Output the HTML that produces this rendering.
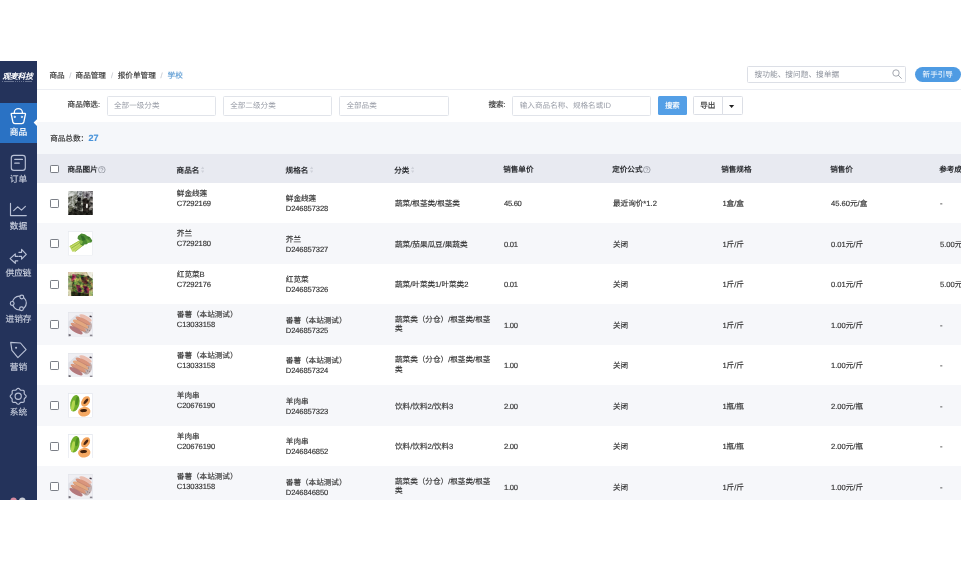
<!DOCTYPE html>
<html lang="zh-CN">
<head>
<meta charset="utf-8">
<title>报价单管理</title>
<style>
html,body{margin:0;padding:0;}
body{width:961px;height:561px;overflow:hidden;background:#fff;position:relative;will-change:transform;
 font-family:"Liberation Sans",sans-serif;font-size:7.6px;color:#333;line-height:1;text-rendering:geometricPrecision;-webkit-text-stroke:0.15px currentColor;}
#thead,#logo,.inp span,#gsearch span,#guide{-webkit-text-stroke:0;}
div,span{box-sizing:border-box;}
.abs{position:absolute;}
#side{position:absolute;left:0;top:61px;width:37px;height:438.6px;background:#24335b;overflow:hidden;}
#logo{position:absolute;left:-0.9px;top:12.3px;width:37px;text-align:center;color:#fff;font-weight:bold;font-style:italic;font-size:7.8px;letter-spacing:-0.2px;white-space:nowrap;}
#logosub{position:absolute;left:2.4px;top:19.6px;width:30px;height:1px;background:repeating-linear-gradient(90deg,#aab3c8 0,#aab3c8 1.5px,transparent 1.5px,transparent 2.1px);opacity:.5;}
.nav{position:absolute;left:0;width:37px;text-align:center;color:#cdd3e1;font-size:8.7px;white-space:nowrap;}
.nav svg{position:absolute;overflow:visible;}
.nav .lb{position:absolute;left:0;width:37px;text-align:center;}
#act{position:absolute;left:0;top:42px;width:37px;height:40px;background:#2a72c4;}
#notch{position:absolute;left:33.4px;top:57.6px;width:0;height:0;border-top:4px solid transparent;border-bottom:4px solid transparent;border-right:3.8px solid #fff;}
#top{position:absolute;left:37px;top:61px;width:924px;height:29.1px;background:#fff;border-bottom:1px solid #eceef3;}
#crumb{position:absolute;left:12.4px;top:11.2px;white-space:nowrap;color:#333;font-size:7.6px;}
#crumb span,#crumb i,#crumb b{position:absolute;top:0;}
#crumb i{font-style:normal;color:#c9ccd3;}
#crumb b{font-weight:normal;color:#5c9bd3;}
#gsearch{position:absolute;left:710px;top:5.4px;width:158.6px;height:16.4px;border:1px solid #dcdfe6;border-radius:1.5px;background:#fff;}
#gsearch span{position:absolute;left:6.6px;top:3.7px;color:#8d929c;font-size:7.7px;white-space:nowrap;}
#guide{position:absolute;left:878px;top:6px;width:45.5px;height:15.2px;border-radius:8px;background:#4e9be3;color:#fff;font-size:7.6px;text-align:center;line-height:15.2px;}
#filter{position:absolute;left:37px;top:90.3px;width:924px;height:31.7px;background:#fff;}
.inp{position:absolute;top:6px;height:19.4px;border:1px solid #e1e4ea;border-radius:1.5px;background:#fff;}
.inp span{position:absolute;left:6.4px;top:5.2px;color:#9a9ea8;font-size:7.6px;white-space:nowrap;}
.lbl{position:absolute;top:11px;white-space:nowrap;color:#333;}
#count{position:absolute;left:37px;top:122px;width:924px;height:32px;background:#f5f7fa;}
#count span{position:absolute;left:13.2px;top:11.8px;white-space:nowrap;}
#count b{color:#4a94da;font-size:9px;margin-left:.3px;}
#thead{position:absolute;left:37px;top:154px;width:924px;height:28.7px;background:#e8eaf1;font-weight:bold;color:#2d2f33;}
#thead .h{position:absolute;top:11.5px;white-space:nowrap;}
.q{display:inline-block;width:7.6px;height:7.6px;vertical-align:-1.2px;margin-left:.4px;}
.s{display:inline-block;width:3.4px;height:7.6px;vertical-align:-1.1px;margin-left:1.4px;}
.cb{position:absolute;left:13.2px;width:8.8px;height:8.8px;border:1px solid #7b7f87;border-radius:1.2px;background:#fff;}
.row{position:absolute;left:37px;width:924px;height:40.5px;background:#fff;}
.row.alt{background:#f6f7fa;}
.row .cb{top:16.1px;}
.row .th{position:absolute;left:30.6px;top:8.2px;width:25px;height:24.6px;}
.c{position:absolute;top:0;height:40.5px;white-space:nowrap;}
.c1{left:139.8px;}.c2{left:248.8px;}.c3{left:358px;width:100px;white-space:normal;}.c4{left:467px;letter-spacing:-.3px;}.c5{left:576px;}.c6{left:685.4px;}.c7{left:794px;}.c8{left:903px;}
.nm{padding-top:6.3px;line-height:9.8px;}
.two{padding-top:11.7px;line-height:10px;}
.nm div+div,.two div+div{letter-spacing:-0.12px;}
.mid{display:flex;align-items:center;line-height:9.4px;padding-top:1.6px;}
.ml{line-height:9.7px;padding-top:0;}
</style>
</head>
<body>
<svg width="0" height="0" style="position:absolute">
<defs>
<filter id="b1" x="-10%" y="-10%" width="120%" height="120%"><feGaussianBlur stdDeviation="0.7"/></filter>
<filter id="b2" x="-10%" y="-10%" width="120%" height="120%"><feGaussianBlur stdDeviation="0.45"/></filter>
<filter id="nz" x="0" y="0" width="100%" height="100%"><feTurbulence type="fractalNoise" baseFrequency="0.22" numOctaves="2" seed="7" result="n"/><feColorMatrix in="n" type="matrix" values="0 0 0 0 0  0 0 0 0 0  0 0 0 0 0  1.6 1.6 0 0 -1.05"/></filter>
<filter id="tx1" x="0" y="0" width="100%" height="100%" color-interpolation-filters="sRGB"><feTurbulence type="fractalNoise" baseFrequency="0.33" numOctaves="3" seed="11" result="n"/><feColorMatrix in="n" type="matrix" values="1.15 0 0 0 -0.12  1.15 0 0 0 -0.12  1.15 0 0 0 -0.12  0 0 0 0 1" result="g"/><feGaussianBlur in="SourceGraphic" stdDeviation="0.8" result="s"/><feBlend in="g" in2="s" mode="overlay"/></filter>
<filter id="tx2" x="0" y="0" width="100%" height="100%" color-interpolation-filters="sRGB"><feTurbulence type="fractalNoise" baseFrequency="0.3" numOctaves="3" seed="5" result="n"/><feColorMatrix in="n" type="matrix" values="0.9 0.4 0 0 -0.22  0.4 0.8 0 0 -0.17  0.35 0.35 0 0 0.1  0 0 0 0 1" result="g"/><feGaussianBlur in="SourceGraphic" stdDeviation="0.8" result="s"/><feBlend in="g" in2="s" mode="overlay"/></filter>
<clipPath id="cp"><rect width="25" height="25"/></clipPath>
<symbol id="im-herb" viewBox="0 0 25 25"><g clip-path="url(#cp)">
 <g filter="url(#tx1)">
  <rect width="25" height="25" fill="#7c7d76"/>
  <path d="M0 0h9l-1 4-8 3z" fill="#c6c9c5"/>
  <path d="M0 6l8-3 2 6-4 7-6-1z" fill="#8e9087"/>
  <path d="M9 0h6l-1 5-4 1z" fill="#8b8f92"/>
  <path d="M15 0h10v6l-5 2-5-2z" fill="#8f8c90"/>
  <path d="M10 6.5l3 .5-.5 4-3-1z" fill="#101011"/>
  <path d="M9 10l4 1 1 8-4 1-2-5z" fill="#3a3a34"/>
  <path d="M15 8l4-1 3 5-1 9-6 1z" fill="#2d2723"/>
  <path d="M0 18l6 0 8 3 11-2v6H0z" fill="#24231e"/>
  <path d="M0 15l5 1 2 4-7 2z" fill="#5a5b4c"/>
  <path d="M2 9l4 1 1 4-4 1z" fill="#a3a59c"/>
  <path d="M18.2 13l1.6 0 .2 4-1.8 .5z" fill="#e6e3df"/>
  <path d="M22 6l3 0v13l-3-1z" fill="#6f6b67"/>
 </g>
</g></symbol>
<symbol id="im-kale" viewBox="0 0 25 25"><g clip-path="url(#cp)">
 <rect width="25" height="25" fill="#fff"/>
 <g filter="url(#b2)">
  <path d="M1.4 15.4l9.6-5.6 4.4 4.4-8.6 6.6-2.6 .4z" fill="#c3d96a"/>
  <path d="M1.6 15.8l9.5-5.6" stroke="#a4c444" stroke-width="1" fill="none"/>
  <path d="M3 17.6l10-6.4" stroke="#8ab234" stroke-width=".8" fill="none"/>
  <path d="M4.8 19.6l9.6-6.8" stroke="#b2d050" stroke-width="1" fill="none"/>
  <path d="M6.8 21l9-7" stroke="#8fb638" stroke-width=".8" fill="none"/>
  <path d="M10 5l3.4-2.4 3.6 .6 2.4 2 2.6 .8 2.6 3.8-1.2 2-3 .2-1.6 1.4-2.4 .2-1.4 1.6-2.6-1.6-.6-3.6-2.4-2.4z" fill="#4c8a32"/>
  <path d="M12.4 4.2l3.6 1.4 1.6 3.6-3 .8z" fill="#2f6a26"/>
  <path d="M18 7.6l4.4 2.6-2.8 2.4z" fill="#6aa640"/>
  <path d="M12 9l3 1.5-1 3-3-1.5z" fill="#7db244"/>
  <path d="M19.6 5.6l2 1.2-1.4 1.2z" fill="#356f28"/>
 </g>
 <rect x=".3" y=".3" width="24.4" height="24.4" fill="none" stroke="#dfe3ea" stroke-width=".6"/>
</g></symbol>
<symbol id="im-amar" viewBox="0 0 25 25"><g clip-path="url(#cp)">
 <g filter="url(#tx2)">
  <rect width="25" height="25" fill="#6f743c"/>
  <path d="M0 0h25v2.5l-6 1.5-8-2-11 2z" fill="#cfcaa6"/>
  <path d="M19 0h6v7l-4-3z" fill="#f1efe4"/>
  <path d="M4.5 2l4 1-1 5-4 1z" fill="#b5566c"/>
  <path d="M0 5l3 2 1 9-2 6-2 1z" fill="#a9b07a"/>
  <path d="M6 8l6-3 4 4-3 8-6-2z" fill="#8d9a4a"/>
  <path d="M13 5l6 0 3 5-4 3-4-3z" fill="#5e3a2c"/>
  <path d="M8 13l4 1 2 6-4 1z" fill="#8a3650"/>
  <path d="M15 14l5 1 3 6-6 1z" fill="#7c2e42"/>
  <path d="M19 8l6 1v8l-4-3z" fill="#8c8a4e"/>
  <path d="M3 20l8 1 8 1 6-1v4H3z" fill="#2e3018"/>
  <path d="M0 18l3 1 0 6H0z" fill="#ded9b8"/>
  <path d="M21 19l4-2v8h-4z" fill="#b0b574"/>
  <path d="M5 14l3 1 0 5-3 0z" fill="#55682c"/>
 </g>
</g></symbol>
<symbol id="im-yam" viewBox="0 0 25 25"><g clip-path="url(#cp)">
 <rect width="25" height="25" fill="#efeff3"/>
 <g filter="url(#b2)">
  <path d="M0 10l8-7 4 1-12 13z" fill="#dedfe5"/>
  <ellipse cx="19.4" cy="15.5" rx="4.6" ry="6.6" transform="rotate(20 19.4 15.5)" fill="#c3b3b3"/>
  <path d="M18 13l1 .4M20 15l1 .5M19 18l1 .4M21.5 12l.8 .4M17.5 20l1 .3M21 18.5l.8.3" stroke="#5a4a50" stroke-width=".7"/>
  <ellipse cx="17.6" cy="6" rx="7" ry="2.3" transform="rotate(27 17.6 6)" fill="#e9bcae"/>
  <ellipse cx="15.1" cy="9" rx="8.4" ry="2.5" transform="rotate(27 15.1 9)" fill="#d9957c"/>
  <ellipse cx="12.6" cy="12.2" rx="8.8" ry="2.6" transform="rotate(27 12.6 12.2)" fill="#e3a77f"/>
  <ellipse cx="10.2" cy="15.4" rx="8.6" ry="2.5" transform="rotate(27 10.2 15.4)" fill="#d8967a"/>
  <ellipse cx="8" cy="18.5" rx="7.6" ry="2.4" transform="rotate(29 8 18.5)" fill="#b4797c"/>
  <path d="M8.5 7.2l13 6.6M6 10.4l13.4 6.8M3.8 13.6l13 6.6" stroke="#8a5856" stroke-width=".45" opacity=".55" fill="none"/>
  <path d="M22 3.5l2 .5-.5 1.5-2-.7z" fill="#3a3440"/>
  <path d="M0 22l3 1-1 2H0z" fill="#6d6a72"/>
  <path d="M22 23h3v2h-3z" fill="#8a8790"/>
 </g>
 <rect x=".3" y=".3" width="24.4" height="24.4" fill="none" stroke="#dde0e8" stroke-width=".6"/>
</g></symbol>
<symbol id="im-papaya" viewBox="0 0 25 25"><g clip-path="url(#cp)">
 <rect width="25" height="25" fill="#fff"/>
 <g filter="url(#b2)">
  <ellipse cx="6.8" cy="10.4" rx="4.6" ry="8.6" transform="rotate(12 6.8 10.4)" fill="#6fae2c"/>
  <ellipse cx="4.9" cy="12.8" rx="1.7" ry="5.5" transform="rotate(12 4.9 12.8)" fill="#b2d650"/>
  <ellipse cx="9" cy="8" rx="1.5" ry="4.6" transform="rotate(12 9 8)" fill="#4f8f22"/>
  <ellipse cx="17.7" cy="8.6" rx="4" ry="5.8" transform="rotate(32 17.7 8.6)" fill="#f2a25a"/>
  <ellipse cx="18" cy="8.4" rx="1.4" ry="3.4" transform="rotate(38 18 8.4)" fill="#4a2714"/>
  <ellipse cx="16.3" cy="19" rx="6.3" ry="4.9" transform="rotate(-8 16.3 19)" fill="#f4a864"/>
  <ellipse cx="15.6" cy="17.8" rx="3.5" ry="1.6" transform="rotate(-5 15.6 17.8)" fill="#43220f"/>
 </g>
 <rect x=".3" y=".3" width="24.4" height="24.4" fill="none" stroke="#d9dee7" stroke-width=".6"/>
</g></symbol>
</defs>
</svg>

<div id="side">
  <div id="logo">观麦科技</div><div id="logosub"></div>
  <div id="act"></div>
  <svg class="abs" style="left:0;top:0" width="37" height="439" viewBox="0 61 37 439" fill="none" stroke="#b9c1d6" stroke-width="1.15" stroke-linecap="round" stroke-linejoin="round">
    <path d="M37.3 118.9L33.6 122.6L37.3 126.3z" fill="#fff" stroke="none"/>
    <!-- bag -->
    <g stroke="#fff" stroke-width="1.3">
      <path d="M14.3 113.3v-.8a4.05 3.9 0 0 1 8.1 0v.8"/>
      <path d="M11.6 113.4h13.5q.5 0 .4.6l-1.7 8q-.4 1.6-2 1.6h-6.9q-1.6 0-2-1.6l-1.7-8q-.1-.6.4-.6z"/>
      <circle cx="14.7" cy="116.9" r=".75" fill="#fff" stroke-width=".5"/>
      <circle cx="21.9" cy="116.9" r=".75" fill="#fff" stroke-width=".5"/>
    </g>
    <!-- order -->
    <rect x="11.3" y="155.4" width="14" height="15" rx="2.6"/>
    <path d="M14.8 159.4h7.6M14.8 163.2h4.4" stroke-width="1.3"/>
    <!-- data -->
    <path d="M10.5 203.4v12.2h15.8"/>
    <path d="M13.7 210.6l3.9-3.8 3.9 3.3 3.9-3.8"/>
    <!-- supply -->
    <path d="M18.9 252.3h2.7v-2.9l4.7 4.9-4.7 4.9v-2.8h-2.7"/>
    <path d="M17.8 256.4h-2.5v-2.5l-5.2 4.7 5.2 4.7v-2.5h2.5"/>
    <!-- stock -->
    <circle cx="19.4" cy="303" r="6.9"/>
    <circle cx="12.2" cy="303.4" r="1.9" fill="#24335b"/>
    <circle cx="21.8" cy="297" r="1.9" fill="#24335b"/>
    <circle cx="21.5" cy="308.8" r="1.9" fill="#24335b"/>
    <!-- tag -->
    <path d="M10.7 342.4l9.8.6 5.6 6.6-8.2 8-6-7.2z"/>
    <circle cx="16.1" cy="347.7" r="1.05" fill="#b9c1d6" stroke="none"/>
    <!-- gear -->
    <path d="M18.20 388.30L18.96 388.54L19.62 389.14L20.18 389.79L20.73 390.20L21.41 390.30L22.26 390.23L23.15 390.27L23.86 390.64L24.23 391.35L24.27 392.24L24.20 393.09L24.30 393.77L24.71 394.32L25.36 394.88L25.96 395.54L26.20 396.30L25.96 397.06L25.36 397.72L24.71 398.28L24.30 398.83L24.20 399.51L24.27 400.36L24.23 401.25L23.86 401.96L23.15 402.33L22.26 402.37L21.41 402.30L20.73 402.40L20.18 402.81L19.62 403.46L18.96 404.06L18.20 404.30L17.44 404.06L16.78 403.46L16.22 402.81L15.67 402.40L14.99 402.30L14.14 402.37L13.25 402.33L12.54 401.96L12.17 401.25L12.13 400.36L12.20 399.51L12.10 398.83L11.69 398.28L11.04 397.72L10.44 397.06L10.20 396.30L10.44 395.54L11.04 394.88L11.69 394.32L12.10 393.77L12.20 393.09L12.13 392.24L12.17 391.35L12.54 390.64L13.25 390.27L14.14 390.23L14.99 390.30L15.67 390.20L16.22 389.79L16.78 389.14L17.44 388.54L18.20 388.30z"/>
    <circle cx="18.2" cy="396.3" r="3.1"/>
    <!-- bottom dots -->
    <circle cx="13.6" cy="500.6" r="3.2" fill="#d58aa0" stroke="none"/>
    <circle cx="22.3" cy="500.6" r="3.2" fill="#c9cdd6" stroke="none"/>
  </svg>
  <div class="nav" style="top:42px;color:#fff"><div class="lb" style="top:25.4px">商品</div></div>
  <div class="nav" style="top:89px"><div class="lb" style="top:24.6px">订单</div></div>
  <div class="nav" style="top:135.5px"><div class="lb" style="top:25.6px">数据</div></div>
  <div class="nav" style="top:182px"><div class="lb" style="top:25.6px">供应链</div></div>
  <div class="nav" style="top:228.5px"><div class="lb" style="top:25.4px">进销存</div></div>
  <div class="nav" style="top:275px"><div class="lb" style="top:26.6px">营销</div></div>
  <div class="nav" style="top:321.5px"><div class="lb" style="top:25.5px">系统</div></div>
</div>

<div id="top">
  <div id="crumb"><span style="left:0">商品</span><i style="left:19.8px">/</i><span style="left:26.2px">商品管理</span><i style="left:61.6px">/</i><span style="left:68.4px">报价单管理</span><i style="left:111px">/</i><b style="left:118.2px">学校</b></div>
  <div id="gsearch"><span>搜功能、搜问题、搜单据</span><svg class="abs" style="left:144.4px;top:2px" width="10" height="10" viewBox="0 0 10 10" fill="none" stroke="#8d929c" stroke-width=".8"><circle cx="4" cy="4" r="3.2"/><path d="M6.4 6.4L9.4 9.4" stroke-linecap="round"/></svg></div>
  <div id="guide">新手引导</div>
</div>

<div id="filter">
  <div class="lbl" style="left:30.6px">商品筛选:</div>
  <div class="inp" style="left:69.6px;width:109.4px"><span>全部一级分类</span></div>
  <div class="inp" style="left:185.8px;width:109.4px"><span>全部二级分类</span></div>
  <div class="inp" style="left:302px;width:109.6px"><span>全部品类</span></div>
  <div class="lbl" style="left:451.4px">搜索:</div>
  <div class="inp" style="left:475.4px;width:138.6px"><span>输入商品名称、规格名或ID</span></div>
  <div class="abs" style="left:620.6px;top:6px;width:29.4px;height:19px;background:#549fe6;border-radius:1.5px;color:#fff;text-align:center;line-height:19px;font-size:7.4px">搜索</div>
  <div class="abs" style="left:656px;top:6px;width:29.6px;height:19px;border:1px solid #dcdfe6;border-radius:1.5px 0 0 1.5px;background:#fff;text-align:center;line-height:17px;">导出</div>
  <div class="abs" style="left:684.6px;top:6px;width:21.4px;height:19px;border:1px solid #dcdfe6;border-radius:0 1.5px 1.5px 0;background:#fff;"><svg class="abs" style="left:6.9px;top:7.4px" width="5.2" height="3" viewBox="0 0 5.2 3"><path d="M0 0h5.2L2.6 3z" fill="#222"/></svg></div>
</div>

<div id="count"><span>商品总数：<b>27</b></span></div>

<div id="thead">
  <span class="cb" style="top:10.6px"></span>
  <div class="h" style="left:30.4px">商品图片<svg class="q" viewBox="0 0 7.6 7.6"><circle cx="3.8" cy="3.8" r="3.3" fill="none" stroke="#7d828c" stroke-width=".65"/><path d="M2.75 3.1a1.05 1.05 0 1 1 1.6 .9q-.55.35-.55.9M3.8 5.6v.5" fill="none" stroke="#7d828c" stroke-width=".65"/></svg></div>
  <div class="h" style="left:139.6px">商品名<svg class="s" viewBox="0 0 3.4 7.6"><path d="M0 3.1L1.7 .6L3.4 3.1zM0 4.5L1.7 7L3.4 4.5z" fill="#cfd2da"/></svg></div>
  <div class="h" style="left:248.6px">规格名<svg class="s" viewBox="0 0 3.4 7.6"><path d="M0 3.1L1.7 .6L3.4 3.1zM0 4.5L1.7 7L3.4 4.5z" fill="#cfd2da"/></svg></div>
  <div class="h" style="left:357.2px">分类<svg class="s" viewBox="0 0 3.4 7.6"><path d="M0 3.1L1.7 .6L3.4 3.1zM0 4.5L1.7 7L3.4 4.5z" fill="#cfd2da"/></svg></div>
  <div class="h" style="left:466.2px">销售单价</div>
  <div class="h" style="left:575.2px">定价公式<svg class="q" viewBox="0 0 7.6 7.6"><circle cx="3.8" cy="3.8" r="3.3" fill="none" stroke="#7d828c" stroke-width=".65"/><path d="M2.75 3.1a1.05 1.05 0 1 1 1.6 .9q-.55.35-.55.9M3.8 5.6v.5" fill="none" stroke="#7d828c" stroke-width=".65"/></svg></div>
  <div class="h" style="left:684.2px">销售规格</div>
  <div class="h" style="left:793.2px">销售价</div>
  <div class="h" style="left:902.2px">参考成本</div>
</div>

<div class="row" style="top:182.7px">
  <span class="cb"></span>
  <svg class="th" viewBox="0 0 25 25"><use href="#im-herb"/></svg>
  <div class="c c1 nm"><div>鲜金线莲</div><div>C7292169</div></div>
  <div class="c c2 two"><div>鲜金线莲</div><div>D246857328</div></div>
  <div class="c c3 mid"><span>蔬菜/根茎类/根茎类</span></div>
  <div class="c c4 mid"><span>45.60</span></div>
  <div class="c c5 mid"><span>最近询价*1.2</span></div>
  <div class="c c6 mid"><span>1盒/盒</span></div>
  <div class="c c7 mid"><span>45.60元/盒</span></div>
  <div class="c c8 mid"><span>-</span></div>
</div>
<div class="row alt" style="top:223.2px">
  <span class="cb"></span>
  <svg class="th" viewBox="0 0 25 25"><use href="#im-kale"/></svg>
  <div class="c c1 nm"><div>芥兰</div><div>C7292180</div></div>
  <div class="c c2 two"><div>芥兰</div><div>D246857327</div></div>
  <div class="c c3 mid"><span>蔬菜/茄果瓜豆/果蔬类</span></div>
  <div class="c c4 mid"><span>0.01</span></div>
  <div class="c c5 mid"><span>关闭</span></div>
  <div class="c c6 mid"><span>1斤/斤</span></div>
  <div class="c c7 mid"><span>0.01元/斤</span></div>
  <div class="c c8 mid"><span>5.00元</span></div>
</div>
<div class="row" style="top:263.7px">
  <span class="cb"></span>
  <svg class="th" viewBox="0 0 25 25"><use href="#im-amar"/></svg>
  <div class="c c1 nm"><div>红苋菜B</div><div>C7292176</div></div>
  <div class="c c2 two"><div>红苋菜</div><div>D246857326</div></div>
  <div class="c c3 mid"><span>蔬菜/叶菜类1/叶菜类2</span></div>
  <div class="c c4 mid"><span>0.01</span></div>
  <div class="c c5 mid"><span>关闭</span></div>
  <div class="c c6 mid"><span>1斤/斤</span></div>
  <div class="c c7 mid"><span>0.01元/斤</span></div>
  <div class="c c8 mid"><span>5.00元</span></div>
</div>
<div class="row alt" style="top:304.2px">
  <span class="cb"></span>
  <svg class="th" viewBox="0 0 25 25"><use href="#im-yam"/></svg>
  <div class="c c1 nm"><div>番薯（本站测试）</div><div>C13033158</div></div>
  <div class="c c2 two"><div>番薯（本站测试）</div><div>D246857325</div></div>
  <div class="c c3 mid ml"><span>蔬菜类（分仓）/根茎类/根茎类</span></div>
  <div class="c c4 mid"><span>1.00</span></div>
  <div class="c c5 mid"><span>关闭</span></div>
  <div class="c c6 mid"><span>1斤/斤</span></div>
  <div class="c c7 mid"><span>1.00元/斤</span></div>
  <div class="c c8 mid"><span>-</span></div>
</div>
<div class="row" style="top:344.7px">
  <span class="cb"></span>
  <svg class="th" viewBox="0 0 25 25"><use href="#im-yam"/></svg>
  <div class="c c1 nm"><div>番薯（本站测试）</div><div>C13033158</div></div>
  <div class="c c2 two"><div>番薯（本站测试）</div><div>D246857324</div></div>
  <div class="c c3 mid ml"><span>蔬菜类（分仓）/根茎类/根茎类</span></div>
  <div class="c c4 mid"><span>1.00</span></div>
  <div class="c c5 mid"><span>关闭</span></div>
  <div class="c c6 mid"><span>1斤/斤</span></div>
  <div class="c c7 mid"><span>1.00元/斤</span></div>
  <div class="c c8 mid"><span>-</span></div>
</div>
<div class="row alt" style="top:385.2px">
  <span class="cb"></span>
  <svg class="th" viewBox="0 0 25 25"><use href="#im-papaya"/></svg>
  <div class="c c1 nm"><div>羊肉串</div><div>C20676190</div></div>
  <div class="c c2 two"><div>羊肉串</div><div>D246857323</div></div>
  <div class="c c3 mid"><span>饮料/饮料2/饮料3</span></div>
  <div class="c c4 mid"><span>2.00</span></div>
  <div class="c c5 mid"><span>关闭</span></div>
  <div class="c c6 mid"><span>1瓶/瓶</span></div>
  <div class="c c7 mid"><span>2.00元/瓶</span></div>
  <div class="c c8 mid"><span>-</span></div>
</div>
<div class="row" style="top:425.7px">
  <span class="cb"></span>
  <svg class="th" viewBox="0 0 25 25"><use href="#im-papaya"/></svg>
  <div class="c c1 nm"><div>羊肉串</div><div>C20676190</div></div>
  <div class="c c2 two"><div>羊肉串</div><div>D246846852</div></div>
  <div class="c c3 mid"><span>饮料/饮料2/饮料3</span></div>
  <div class="c c4 mid"><span>2.00</span></div>
  <div class="c c5 mid"><span>关闭</span></div>
  <div class="c c6 mid"><span>1瓶/瓶</span></div>
  <div class="c c7 mid"><span>2.00元/瓶</span></div>
  <div class="c c8 mid"><span>-</span></div>
</div>
<div class="row alt" style="top:466.2px">
  <span class="cb"></span>
  <svg class="th" viewBox="0 0 25 25"><use href="#im-yam"/></svg>
  <div class="c c1 nm"><div>番薯（本站测试）</div><div>C13033158</div></div>
  <div class="c c2 two"><div>番薯（本站测试）</div><div>D246846850</div></div>
  <div class="c c3 mid ml"><span>蔬菜类（分仓）/根茎类/根茎类</span></div>
  <div class="c c4 mid"><span>1.00</span></div>
  <div class="c c5 mid"><span>关闭</span></div>
  <div class="c c6 mid"><span>1斤/斤</span></div>
  <div class="c c7 mid"><span>1.00元/斤</span></div>
  <div class="c c8 mid"><span>-</span></div>
</div>
<div class="abs" style="left:0;top:499.6px;width:961px;height:62px;background:#fff;z-index:5"></div>

</body>
</html>
